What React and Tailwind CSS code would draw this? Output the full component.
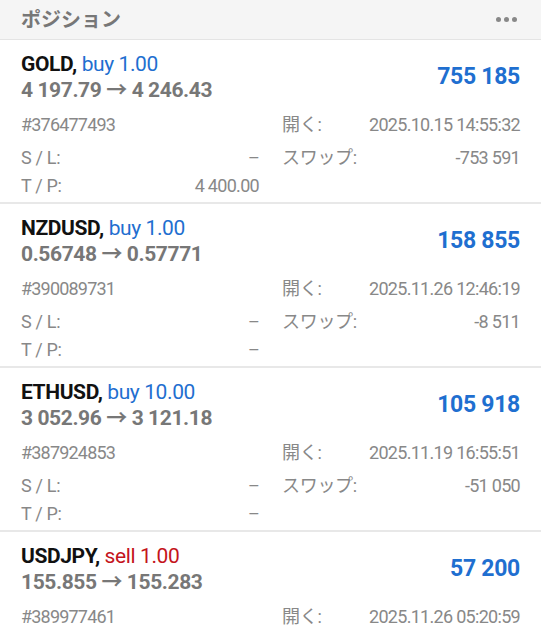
import React from "react";

const font = { fontFamily: "Roboto, 'Noto Sans CJK JP', sans-serif" };

const positions = [
  {
    sym: "GOLD",
    side: "buy",
    vol: "1.00",
    from: "4 197.79",
    to: "4 246.43",
    profit: "755 185",
    id: "#376477493",
    open: "2025.10.15 14:55:32",
    sl: "–",
    tp: "4 400.00",
    swap: "-753 591",
  },
  {
    sym: "NZDUSD",
    side: "buy",
    vol: "1.00",
    from: "0.56748",
    to: "0.57771",
    profit: "158 855",
    id: "#390089731",
    open: "2025.11.26 12:46:19",
    sl: "–",
    tp: "–",
    swap: "-8 511",
  },
  {
    sym: "ETHUSD",
    side: "buy",
    vol: "10.00",
    from: "3 052.96",
    to: "3 121.18",
    profit: "105 918",
    id: "#387924853",
    open: "2025.11.19 16:55:51",
    sl: "–",
    tp: "–",
    swap: "-51 050",
  },
  {
    sym: "USDJPY",
    side: "sell",
    vol: "1.00",
    from: "155.855",
    to: "155.283",
    profit: "57 200",
    id: "#389977461",
    open: "2025.11.26 05:20:59",
    last: true,
  },
];

function Row({ label, value }) {
  return (
    <div className="flex justify-between items-center h-[28px]">
      <span className="tracking-[-0.3px]">{label}</span>
      <span className="tracking-[-0.7px]">{value}</span>
    </div>
  );
}

function Card({ p }) {
  return (
    <div className="px-[21px] pt-[11px] border-b-2 border-[#e8e8e8] h-[164px]">
      <div className="flex justify-between items-center">
        <div>
          <div className="text-[21px] leading-[26px] tracking-[-0.4px]">
            <span className="font-bold text-[#111]">{p.sym},</span>{" "}
            <span className={p.side === "buy" ? "text-[#1f6fd0]" : "text-[#c4141b]"}>
              {p.side} {p.vol}
            </span>
          </div>
          <div className="text-[21px] leading-[26px] font-bold text-[#777] tracking-[-0.4px]">
            {p.from} → {p.to}
          </div>
        </div>
        <div className="text-[23px] font-bold text-[#1f6fd0] tracking-[-0.3px]">{p.profit}</div>
      </div>
      <div className="grid grid-cols-2 gap-x-[23px] mt-[3px] text-[18px] text-[#888]">
        <div>
          <div className="h-[37px] flex items-center tracking-[-0.8px]">{p.id}</div>
          {!p.last && <Row label="S / L:" value={p.sl} />}
          {!p.last && <Row label="T / P:" value={p.tp} />}
        </div>
        <div>
          <div className="h-[37px] flex items-center justify-between">
            <span className="tracking-[-0.3px]">開く:</span>
            <span className="tracking-[-0.7px]">{p.open}</span>
          </div>
          {!p.last && <Row label="スワップ:" value={p.swap} />}
        </div>
      </div>
    </div>
  );
}

export default function App() {
  return (
    <div className="w-[541px] h-[640px] overflow-hidden bg-white" style={font}>
      <div className="h-[40px] bg-[#f5f5f5] border-b border-[#e4e4e4] flex items-center justify-between px-[21px]">
        <span className="text-[20px] text-[#777] font-bold">ポジション</span>
        <div className="flex gap-[3px] pr-[3px]">
          <span className="w-[5px] h-[5px] rounded-full bg-[#888]" />
          <span className="w-[5px] h-[5px] rounded-full bg-[#888]" />
          <span className="w-[5px] h-[5px] rounded-full bg-[#888]" />
        </div>
      </div>
      {positions.map((p) => (
        <Card key={p.id} p={p} />
      ))}
    </div>
  );
}
